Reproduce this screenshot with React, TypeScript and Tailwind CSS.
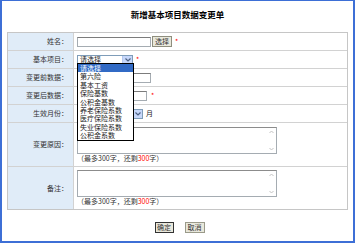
const options = [
  "请选择",
  "第六险",
  "基本工资",
  "保险基数",
  "公积金基数",
  "养老保险系数",
  "医疗保险系数",
  "失业保险系数",
  "公积金系数",
];

const Star = () => <span className="ml-[3px] text-[#ff0000]">*</span>;

const Arrow = () => (
  <span className="flex h-full w-[10px] items-center justify-center border-l border-[#b5c8ef] bg-[#c6d7fa]">
    <svg width="6" height="4" viewBox="0 0 6 4">
      <path d="M0.5 0.5 L3 3 L5.5 0.5" fill="none" stroke="#4d6185" strokeWidth="1.2" />
    </svg>
  </span>
);

const Select = ({ width, text }: { width: string; text?: string }) => (
  <div className={`flex h-[10px] items-center border border-[#7f9db9] bg-white ${width}`}>
    <span className="flex-1 pl-[2px] leading-none text-[#222]">{text}</span>
    <Arrow />
  </div>
);

const Input = ({ width }: { width: string }) => (
  <div className={`h-[10px] border border-[#a5acb2] border-t-[#7c7c7c] bg-white ${width}`} />
);

const TextArea = () => (
  <div className="flex h-[27px] w-[200px] border border-[#a5acb2] border-t-[#8c8c8c] bg-white">
    <div className="flex-1" />
    <div className="flex w-[8px] flex-col justify-between py-[1px] text-[#c8c8c8]">
      <svg width="7" height="6" viewBox="0 0 7 6">
        <path d="M1.5 4 L3.5 2 L5.5 4" fill="none" stroke="#c4c4c4" strokeWidth="1" />
      </svg>
      <svg width="7" height="6" viewBox="0 0 7 6">
        <path d="M1.5 2 L3.5 4 L5.5 2" fill="none" stroke="#c4c4c4" strokeWidth="1" />
      </svg>
    </div>
  </div>
);

const Hint = () => (
  <div className="h-[9px] leading-[9px] text-[#333]">
    （最多300字，还剩<span className="text-[#ff0000]">300</span>字）
  </div>
);

const Row = ({
  label,
  children,
  className = "h-[18px] border-b",
}: {
  label: string;
  children: React.ReactNode;
  className?: string;
}) => (
  <div className={`flex border-[#d2d2d2] ${className}`}>
    <div className="flex w-[66px] items-center justify-end border-r border-[#d2d2d2] bg-[#e0ecf8] pr-[5px] text-[#333]">
      {label}
    </div>
    <div className="flex flex-1 items-center pl-[3px]">{children}</div>
  </div>
);

export default function App() {
  return (
    <div className="relative h-[243px] w-[355px] border-2 border-t border-[#3d6fd6] bg-white font-['SimSun','Noto_Sans_CJK_SC',sans-serif] text-[7px]">
      <div className="flex h-[31px] items-center justify-center pb-[5px] text-[8.5px] font-bold text-black">
        新增基本项目数据变更单
      </div>

      <div className="mx-[5px] border border-[#c6c6c6]">
        <Row label="姓名：">
          <Input width="w-[74px]" />
          <button className="ml-[1px] h-[11px] w-[20px] border border-[#8e8e7e] bg-[#e9e8dc] leading-none text-[#333]">
            选择
          </button>
          <Star />
        </Row>
        <Row label="基本项目：">
          <Select width="w-[56px]" text="请选择" />
          <Star />
        </Row>
        <Row label="变更前数据：">
          <Input width="w-[74px]" />
        </Row>
        <Row label="变更后数据：">
          <Input width="w-[70px]" />
          <span className="ml-[4px] text-[#ff0000]">*</span>
        </Row>
        <Row label="生效月份：">
          <Select width="w-[66px]" />
          <span className="ml-[3px] text-[#222]">月</span>
        </Row>
        <div className="flex h-[44px] border-b border-[#d2d2d2]">
          <div className="flex w-[66px] items-center justify-end border-r border-[#d2d2d2] bg-[#e0ecf8] pr-[5px] text-[#333]">
            变更原因：
          </div>
          <div className="flex-1 pl-[3px] pt-[4px]">
            <TextArea />
            <Hint />
          </div>
        </div>
        <div className="flex h-[42px]">
          <div className="flex w-[66px] items-center justify-end border-r border-[#d2d2d2] bg-[#e0ecf8] pr-[5px] text-[#333]">
            备注：
          </div>
          <div className="flex-1 pl-[3px] pt-[3px]">
            <TextArea />
            <Hint />
          </div>
        </div>
      </div>

      <div className="mt-[12px] flex justify-center gap-[11px] pl-[4px]">
        <button className="h-[11px] w-[19px] border border-[#333] bg-[#e9e8dc] leading-none text-[#333]">
          确定
        </button>
        <button className="h-[11px] w-[20px] border border-[#9a9a8a] bg-[#e9e8dc] leading-none text-[#333]">
          取消
        </button>
      </div>

      {/* open dropdown of 基本项目 */}
      <div className="absolute left-[75px] top-[62px] w-[57px] border border-black bg-white">
        {options.map((o, i) => (
          <div
            key={o}
            className={`h-[8.4px] pl-[2px] leading-[8.4px] ${
              i === 0 ? "bg-[#316ac5] text-white" : "text-[#222]"
            }`}
          >
            {o}
          </div>
        ))}
      </div>
    </div>
  );
}
